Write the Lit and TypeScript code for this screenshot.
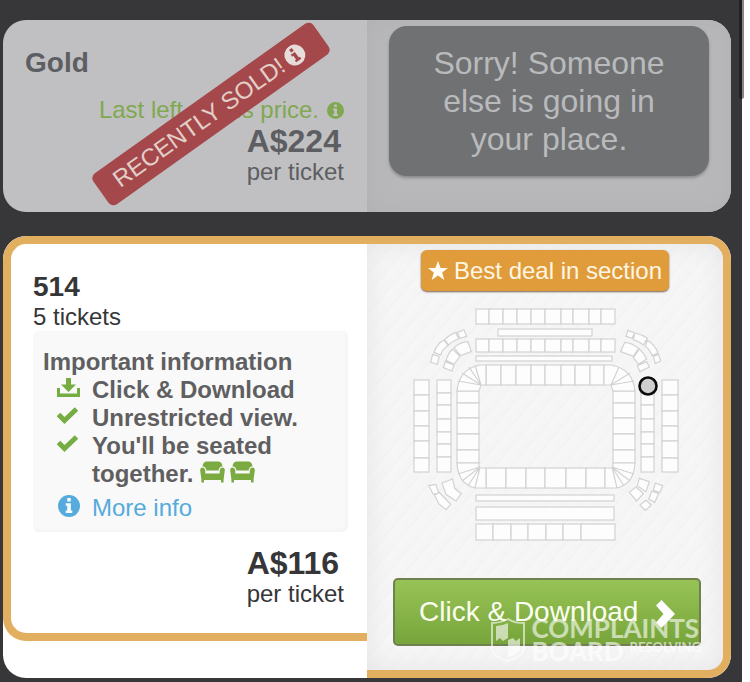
import { LitElement, html, svg, css } from "lit";
import { customElement } from "lit/decorators.js";

const infoIcon = (label: string) => html`<svg class="ico" viewBox="0 0 20 20" role="img" aria-label=${label}>
  <path
    fill="currentColor"
    fill-rule="evenodd"
    d="M10 0a10 10 0 1 0 0 20a10 10 0 1 0 0-20zM8.4 2.8h3.2v3.2H8.4zM7 7.6h4.7v6.6H13v2.2H7v-2.2h1.4V9.8H7z"
  />
</svg>`;

const checkIcon = html`<svg class="mark" viewBox="0 0 24 24" aria-hidden="true">
  <path fill="none" stroke="currentColor" stroke-width="5" d="M2.5 10.5L8.5 16.5L20.5 5" />
</svg>`;

const downloadIcon = html`<svg class="mark" viewBox="0 0 24 24" aria-hidden="true">
  <path fill="currentColor" d="M10 2h5v6.500h5l-7.5 7.500L5 8.500h5zM1 12h3v5.500h17V12h3v9H1z" />
</svg>`;

const seatIcon = html`<svg class="seat" viewBox="0 0 25 22" aria-hidden="true">
  <path
    fill="currentColor"
    d="M7 0.500h11q4 0 4.500 4.800q-3.500.4-3.900 4.200H6.400Q6 5.700 2.500 5.300Q3 .5 7 .5zM2.500 6.600Q5 6.800 5.300 9.500V12.500H19.700V9.500Q20 6.800 22.500 6.600Q25 7 24.800 9.500L23.600 18.500V21.500H21V19H4V21.500H1.400V18.500L.2 9.500Q0 7 2.500 6.600z"
  />
</svg>`;

/** One strip of seating blocks, cut at the given edges. */
const strip = (edges: number[], start: number, size: number, vertical = false) =>
  edges.slice(1).map((end, i) => {
    const from = edges[i];
    return vertical
      ? svg`<rect x=${start} y=${from} width=${size} height=${end - from} />`
      : svg`<rect x=${from} y=${start} width=${end - from} height=${size} />`;
  });

const upper = [476, 489, 503, 517, 531, 545, 561, 573, 589, 601, 615];
const outerCol = [380, 395, 411, 426, 441, 458, 472];
const innerCol = [380, 393, 405, 419, 432, 444, 457, 472];
const bowlSide = [391, 403, 418, 434, 450, 463];

const stadium = html`<svg class="map" viewBox="400 300 290 250" role="img" aria-label="Stadium seating map">
  <g fill="#fdfdfd" stroke="#d2d2d2" stroke-width="1.2">
    ${strip(upper, 309, 15)} ${strip([498, 592], 329, 7)} ${strip(upper, 339, 13)}
    ${strip([476, 612], 356, 5)}
    ${strip([486, 501, 516, 531, 545, 561, 575, 590, 604], 365, 20)}
    ${strip([486, 506, 526, 545, 566, 586, 605], 468, 20)}
    ${strip(bowlSide, 457, 22, true)} ${strip(bowlSide, 613, 22, true)}
    ${strip(outerCol, 414, 15, true)} ${strip(innerCol, 437, 14, true)}
    ${strip(innerCol, 641, 13, true)} ${strip(outerCol, 662, 16, true)}
    ${strip([476, 614], 495, 6)} ${strip([476, 614], 507, 13)}
    ${strip([476, 493, 511, 528, 546, 563, 581, 615], 524, 16)}
    <path d="M457 391Q459 369 480 365H486V385H481L479 391zM481 385L458 381M481 385L462 373M481 385L469 367M481 385L475 365" />
    <path d="M635 391Q633 369 611 365H604V385H611L613 391zM611 385L634 381M611 385L630 373M611 385L619 367" />
    <path d="M457 463Q458 484 475 488H486V468H479V463zM480 467L458 474M480 467L462 481M480 467L468 486M480 467L475 488" />
    <path d="M635 463Q634 484 617 488H605V468H613V463zM612 467L634 474M612 467L630 481M612 467L624 486M612 467L617 488" />
  </g>
  <g fill="#fdfdfd" stroke="#d2d2d2" stroke-width="3.600">
    <g transform="translate(400 295) scale(.3333)">
      <path d="M98 178L118 184L112 208L92 202zM102 172Q112 145 132 135L144 152Q128 160 122 180zM134 134Q150 118 168 113L176 132Q160 136 146 150zM172 112L192 104L200 124L180 130z" />
      <path d="M162 158Q182 140 204 140L214 170L182 182zM138 196Q146 172 158 162L180 184L162 208zM136 200L162 210L156 228L130 218z" />
    </g>
    <g transform="translate(540 295) scale(.3333)">
      <path d="M264 106L284 114L276 130L258 124zM284 114Q306 118 322 130L310 150Q296 138 280 134zM322 136Q344 148 354 174L336 182Q330 164 316 154zM340 184L356 178L362 198L346 206z" />
      <path d="M254 142Q276 144 296 160L280 184L242 170zM298 162Q310 172 320 192L296 208L280 188zM292 212L320 200L328 216L300 230z" />
    </g>
    <g transform="translate(400 415) scale(.3333)">
      <path d="M126 204L158 192L164 220L184 236L168 258L138 238zM86 212L108 208L116 234L100 238zM104 240L118 232L152 268L138 284L116 266z" />
      <path d="M718 190L748 200L738 230L712 212zM708 216L730 236L710 258L688 232zM766 204L788 212L780 232L760 226zM756 228L776 236L764 262L746 252zM738 256L754 270L736 286L720 270z" />
    </g>
  </g>
  <circle cx="648" cy="386" r="8.500" fill="#cfcfcf" stroke="#0c0c0c" stroke-width="2.600" />
</svg>`;

@customElement("app-root")
export class AppRoot extends LitElement {
  static styles = css`
    :host {
      display: flex;
      min-height: 100vh;
      background: #fff;
      font-family: "Liberation Sans", Arial, sans-serif;
      font-size: 24px;
      line-height: 28px;
      color: #363638;
    }
    * {
      box-sizing: border-box;
    }
    h2, p, ul {
      margin: 0;
      padding: 0;
    }
    .page {
      position: relative;
      flex: 1;
      display: flex;
      flex-direction: column;
      gap: 24px;
      padding: 20px 11px 4px 3px;
      margin-right: 8px;
      background: #373739;
    }
    .thumb {
      position: absolute;
      top: 0;
      right: -2px;
      width: 5px;
      height: 99px;
      border-radius: 0 0 3px 3px;
      background: rgba(10, 10, 12, 0.5);
    }
    .card {
      display: grid;
      grid-template-columns: 1fr 1fr;
      border-radius: 23px;
      overflow: hidden;
      background: #fff;
    }
    .sold {
      position: relative;
      background: #c0c0c2;
      color: #5d5e61;
    }
    .info {
      padding: 27px 23px 24px 22px;
    }
    h2 {
      font-size: 28px;
      line-height: 32px;
    }
    .last {
      display: flex;
      justify-content: flex-end;
      align-items: center;
      gap: 8px;
      margin-top: 17px;
      color: #80a850;
    }
    .ico {
      width: 17px;
      height: 17px;
      flex: none;
    }
    .price {
      width: fit-content;
      margin-left: auto;
    }
    .amount {
      display: block;
      font-size: 32px;
      line-height: 34px;
      font-weight: bold;
    }
    .ribbon {
      position: absolute;
      left: 73px;
      top: 75px;
      width: 270px;
      height: 38px;
      display: flex;
      align-items: center;
      justify-content: space-between;
      padding: 0 22px 0 18px;
      border-radius: 6px;
      background: #a5484c;
      color: #e2cfc8;
      white-space: nowrap;
      transform: rotate(-35.4deg);
    }
    .ribbon .ico {
      width: 21px;
      height: 21px;
      color: #e6dcd9;
    }
    .side {
      padding: 6px 22px 36px;
      background: #b8b8ba;
      box-shadow: inset 0 0 24px #b1b1b4;
    }
    .sorry {
      padding: 18px 40px;
      border-radius: 18px;
      background: #707173;
      box-shadow: 0 2px 3px rgba(70, 70, 75, 0.4);
      color: #b9babc;
      font-size: 32px;
      line-height: 38px;
      text-align: center;
    }
    .deal .info {
      align-self: start;
      padding: 27px 19px 25px 22px;
      border: 8px solid #e2af60;
      border-right: 0;
      border-radius: 23px 0 0 23px;
    }
    .details {
      margin-bottom: 14px;
      padding: 17px 10px 10px;
      border-radius: 6px;
      background: #f9f9f9;
      box-shadow: inset -3px -3px 2px #f5f5f5;
      color: #5f5f61;
      font-weight: bold;
    }
    .deal .price {
      margin-right: 4px;
    }
    ul {
      list-style: none;
    }
    li {
      display: flex;
      gap: 12px;
      padding-left: 13px;
    }
    .mark {
      flex: none;
      width: 24px;
      height: 24px;
      color: #76ad42;
    }
    .seat {
      width: 25px;
      height: 22px;
      margin-right: 5px;
      vertical-align: -1px;
      color: #7bab40;
    }
    .more {
      display: flex;
      align-items: center;
      gap: 12px;
      margin-top: 6px;
      padding-left: 15px;
      color: #55abdc;
      font-weight: normal;
      text-decoration: none;
    }
    .more .ico {
      width: 22px;
      height: 22px;
      margin-bottom: 4px;
    }
    .buy {
      position: relative;
      display: flex;
      flex-direction: column;
      align-items: center;
      padding: 6px 22px 24px 26px;
      border: 8px solid #e2af60;
      border-left: 0;
      border-radius: 0 23px 23px 0;
      background: repeating-linear-gradient(130deg, #f5f5f5 0 5px, #f3f3f4 6px 7px, #f6f6f6 8px 13px);
    }
    .buy::before {
      content: "";
      position: absolute;
      inset: 0;
      border-radius: 0 15px 15px 0;
      box-shadow: inset 0 0 24px #e4e4e7;
    }
    .badge, .map, .cta {
      position: relative;
    }
    .badge {
      display: flex;
      align-items: center;
      gap: 6px;
      height: 41px;
      padding: 0 7px;
      margin-right: 4px;
      border-radius: 6px;
      background: #e09c3b;
      box-shadow: 0 1px 2px #75604a;
      color: #fff6e2;
      white-space: nowrap;
    }
    .star {
      width: 20px;
      height: 20px;
    }
    .map {
      width: 290px;
      max-width: 100%;
      margin: 9px 4px 28px 0;
    }
    .cta {
      width: 100%;
      height: 68px;
      display: flex;
      align-items: center;
      justify-content: space-between;
      padding: 0 24px;
      border: 2px solid #71804f;
      border-radius: 5px;
      background: linear-gradient(#97c356, #78a53b);
      color: #fbfff2;
      font: 28px/32px "Liberation Sans", Arial, sans-serif;
      white-space: nowrap;
    }
    .arrow {
      width: 20px;
      height: 30px;
      margin-top: 3px;
    }
    .watermark {
      position: absolute;
      right: 22px;
      bottom: 7px;
      display: flex;
      align-items: center;
      gap: 6px;
      color: #fff;
      opacity: 0.6;
      font-family: Lato, sans-serif;
      font-weight: bold;
      pointer-events: none;
    }
    .shield {
      width: 34px;
      height: 44px;
    }
    .brand {
      display: block;
      font-size: 26px;
      line-height: 23px;
    }
    .row {
      display: flex;
      gap: 6px;
    }
    .tag {
      font-size: 13px;
      line-height: 14px;
    }
  `;

  render() {
    return html`<main class="page">
      <section class="card sold">
        <div class="info">
          <h2>Gold</h2>
          <p class="last">Last left at this price. ${infoIcon("About this price")}</p>
          <p class="price"><span class="amount">A$224</span>per ticket</p>
        </div>
        <div class="side"><p class="sorry">Sorry! Someone else is going in your place.</p></div>
        <div class="ribbon">RECENTLY SOLD! ${infoIcon("About sold tickets")}</div>
      </section>

      <section class="card deal">
        <div class="info">
          <h2>514</h2>
          <p>5 tickets</p>
          <div class="details">
            <p>Important information</p>
            <ul>
              <li>${downloadIcon}<span>Click &amp; Download</span></li>
              <li>${checkIcon}<span>Unrestricted view.</span></li>
              <li>${checkIcon}<span>You'll be seated together. ${seatIcon}${seatIcon}</span></li>
            </ul>
            <a class="more" href="#info">${infoIcon("Info")}<span>More info</span></a>
          </div>
          <p class="price"><span class="amount">A$116</span>per ticket</p>
        </div>
        <div class="buy">
          <div class="badge">
            <svg class="star" viewBox="0 0 20 20" aria-hidden="true">
              <path fill="#fffdf5" d="M10 0L12.600 7H20L14.200 11.500L16.300 19L10 14.600L3.700 19L5.800 11.500L0 7H7.400z" />
            </svg>
            <span>Best deal in section</span>
          </div>
          ${stadium}
          <button class="cta" type="button">
            <span>Click &amp; Download</span>
            <svg class="arrow" viewBox="0 0 20 30" aria-hidden="true">
              <path fill="#fff" d="M6.500 1L20 15L6.500 29L1 23.500L8.500 15L1 6.500z" />
            </svg>
          </button>
          <div class="watermark">
            <svg class="shield" viewBox="0 0 34 44" aria-hidden="true">
              <path fill="none" stroke="#fff" stroke-width="2" d="M1 5Q10 5 17 1Q24 5 33 5V31Q32 39 17 43Q2 39 1 31z" />
              <path fill="#fff" d="M5 8Q11 8 17 5V20L12 23L9 20L5 23zM17 22L22 20L25 23L29 20V31Q28 36 17 39z" />
            </svg>
            <div>
              <span class="brand">COMPLAINTS</span>
              <div class="row"><span class="brand">BOARD</span><span class="tag">RESOLVING</span></div>
            </div>
          </div>
        </div>
      </section>
      <div class="thumb"></div>
    </main>`;
  }
}
